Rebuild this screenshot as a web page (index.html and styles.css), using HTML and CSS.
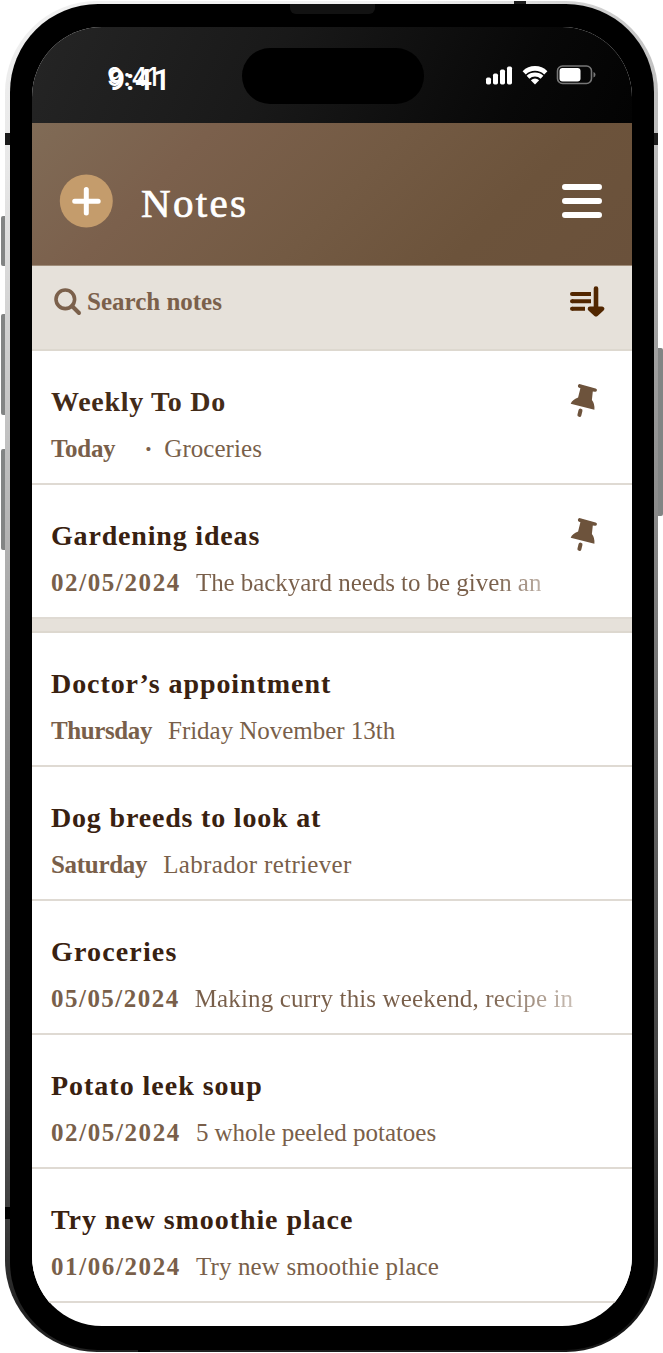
FILE: index.html
```html
<!DOCTYPE html>
<html lang="en">
<head>
<meta charset="utf-8">
<title>Notes</title>
<link rel="stylesheet" href="styles.css">
</head>
<body>
<svg class="defs" aria-hidden="true">
  <symbol id="pin" viewBox="0 0 28 36">
    <path d="M9.400 1 25.600 5.400q1.700.6 1.300 2.200-.5 1.500-2.100 1.200l-2-.4-.9 8.500q3 3.700 2.500 9.800L.700 20.700q1.500-4 7.400-6.200L10.400 5.300 9.100 4.800Q7.600 4.300 7.900 2.600 8.400.900 9.400 1Z" fill="#6d533c"/>
    <path d="m10.500 27.600-1.100 4.300" stroke="#6d533c" stroke-width="4" stroke-linecap="round"/>
  </symbol>
</svg>
<div class="phone">
  <i class="key key-action"></i><i class="key key-up"></i><i class="key key-down"></i><i class="key key-power"></i>
  <i class="band band-top"></i><i class="band band-left"></i><i class="band band-right"></i><i class="band band-left low"></i><i class="band band-bottom"></i>
  <div class="bezel">
    <i class="speaker"></i>
    <main class="screen">
      <div class="status">
        <div class="clock"><span class="time-small">9:41</span><span class="time-large">9:41</span></div>
        <div class="island"></div>
        <svg class="indicators" width="111" height="22" viewBox="0 0 111 22">
          <g fill="#fff"><rect x="1" y="12.500" width="5" height="7" rx="1.700"/><rect x="8" y="8.500" width="5" height="11" rx="1.700"/><rect x="15" y="4.500" width="5" height="15" rx="1.700"/><rect x="22" y="1.500" width="5" height="18" rx="1.700"/></g>
          <g fill="none" stroke="#fff"><path d="M39.200 7.800a15.500 15.500 0 0 1 21.600 0" stroke-width="4.600"/><path d="M43 12.200a10.200 10.200 0 0 1 14 0" stroke-width="4"/></g>
          <path d="M45.800 15.200q4.200-3.200 8.400 0L50 19.600Z" fill="#fff"/>
          <rect x="72.500" y="1" width="34" height="17.500" rx="5" fill="none" stroke="#777" stroke-width="1.600"/>
          <rect x="74.500" y="3" width="21" height="13.500" rx="3" fill="#fff"/><path d="M108.500 7v5.500q2-.7 2-2.700t-2-2.800Z" fill="#777"/>
        </svg>
      </div>
      <header class="header">
        <svg class="add" width="54" height="54" viewBox="0 0 54 54"><circle cx="27.300" cy="27" r="26.500" fill="#c49c6c"/><path d="M27.300 15.500v23.500M15.700 27.200h23.500" stroke="#fff" stroke-width="5" stroke-linecap="round"/></svg>
        <h1>Notes</h1>
        <svg class="menu" width="40" height="34" viewBox="0 0 40 34"><path d="M3 3h34M3 17h34M3 31h34" stroke="#fff" stroke-width="6" stroke-linecap="round"/></svg>
      </header>
      <div class="search">
        <svg width="28" height="28" viewBox="0 0 28 28" fill="none" stroke="#7b604b" stroke-width="3.600"><circle cx="11.300" cy="11.300" r="9.300"/><path d="m18 18 7 7" stroke-linecap="round" stroke-width="4"/></svg>
        <span>Search notes</span>
        <svg class="sort" width="35" height="32" viewBox="0 0 35 32" fill="none" stroke="#512600"><path d="M2 8h19M2 15.300h19M2 22.700h13" stroke-width="4"/><path d="M2 8h.1M2 15.300h.1M2 22.700h.1" stroke-width="4" stroke-linecap="round"/><path d="M26 2.500v25M20 22.700l6 5.500 6-5.500Z" fill="#512600" stroke-width="4.600" stroke-linecap="round" stroke-linejoin="round"/></svg>
      </div>
      <section class="notes pinned">
        <article class="note"><h2 class="t1">Weekly To Do</h2><p><b class="d1">Today</b><i class="dot">·</i><span class="s1">Groceries</span></p><svg class="pin"><use href="#pin"/></svg></article>
        <article class="note"><h2 class="t2">Gardening ideas</h2><p><b class="date">02/05/2024</b><span class="s2">The backyard needs to be given an</span></p><svg class="pin"><use href="#pin"/></svg></article>
      </section>
      <section class="notes">
        <article class="note"><h2 class="t3">Doctor’s appointment</h2><p><b class="d3">Thursday</b><span class="s3">Friday November 13th</span></p></article>
        <article class="note"><h2 class="t4">Dog breeds to look at</h2><p><b class="d4">Saturday</b><span class="s4">Labrador retriever</span></p></article>
        <article class="note"><h2 class="t5">Groceries</h2><p><b class="date d5">05/05/2024</b><span class="s5">Making curry this weekend, recipe in</span></p></article>
        <article class="note"><h2 class="t6">Potato leek soup</h2><p><b class="date">02/05/2024</b><span class="s6">5 whole peeled potatoes</span></p></article>
        <article class="note"><h2 class="t7">Try new smoothie place</h2><p><b class="date">01/06/2024</b><span class="s7">Try new smoothie place</span></p></article>
      </section>
    </main>
  </div>
</div>
</body>
</html>
```

FILE: styles.css
```css
* { box-sizing: border-box; }
body { margin: 0; width: 663px; height: 1353px; overflow: hidden; background: #fff; font-family: "Liberation Serif", serif; }
.defs { position: absolute; width: 0; height: 0; }
.phone { position: relative; width: 653px; height: 1351px; margin: 1px 0 0 5px; padding: 3px 4px 2px 5px; border-radius: 92px; background: linear-gradient(100deg, transparent 45%, rgba(0,0,0,.35)), linear-gradient(#f1f1f1, #e8e8e8 12%, #a8a8a8 45%, #606060 80%, #222 97%); }
.bezel { position: relative; height: 1346px; padding: 23px 22px 25px; border-radius: 88px; background: #000; }
.screen { height: 1299px; border-radius: 70px; overflow: hidden; background: #fff; }
.speaker { position: absolute; left: 280px; top: 0; width: 85px; height: 10px; border-radius: 0 0 6px 6px; background: #121212; }
.key { position: absolute; width: 5px; background: #828484; border-radius: 2px 0 0 2px; z-index: -1; }
.key-action { left: -4px; top: 215px; height: 50px; }
.key-up { left: -4px; top: 313px; height: 101px; }
.key-down { left: -4px; top: 448px; height: 101px; }
.key-power { left: 652px; top: 347px; height: 168px; width: 6px; border-radius: 0 2px 2px 0; }
.band { position: absolute; background: #1c1c1c; }
.band-top { left: 509px; top: 0; width: 12px; height: 4px; }
.band-left { left: 0; top: 132px; width: 5px; height: 12px; }
.band-right { right: 0; top: 132px; width: 5px; height: 12px; }
.low { top: 1206px; background: #000; }
.band-bottom { left: 133px; bottom: 0; width: 12px; height: 3px; background: #000; }
.status { height: 96px; display: grid; grid-template-columns: 210px 182px 1fr; background: linear-gradient(115deg, #252525, #191919 40%, #080808 80%, #030303); }
.clock { display: grid; justify-items: start; align-items: start; padding: 38px 0 0 75px; color: #fff; }
.clock span { grid-area: 1 / 1; }
.time-small { font: 500 25px/24px Inter, sans-serif; letter-spacing: .5px; }
.time-large { margin: 3px 0 0 1px; font: 600 30px/24px Roboto, sans-serif; letter-spacing: .9px; }
.island { height: 56px; margin-top: 21px; border-radius: 28px; background: #000; }
.indicators { margin: 38px 0 0 61px; }
.header { height: 143px; display: flex; align-items: center; padding: 14px 30px 0 27px; background: linear-gradient(135deg, #806b56, #7b604c 25%, #735a43 52%, #6c533b 75%, #6a513b); border-bottom: 1px solid #a08d7a; }
h1 { margin: 3px 0 0 28px; font-size: 41px; font-weight: 400; letter-spacing: 2.3px; color: #fff; -webkit-text-stroke: .7px #fff; }
.menu { margin-left: auto; }
.search { height: 85px; display: flex; align-items: center; padding: 0 27px 12px 22px; background: #e6e1da; border-bottom: 2px solid #ddd8cf; color: #7b604b; font-size: 25px; font-weight: 700; }
.search span { margin-left: 5px; }
.sort { margin: 1px 0 0 auto; }
.note { position: relative; height: 134px; padding: 34px 19px 0; background: #fff; border-bottom: 2px solid #dfdad3; }
h2 { margin: 0; font-size: 28px; line-height: 34px; font-weight: 700; letter-spacing: .82px; color: #392110; white-space: nowrap; }
.note p { margin: 16px 0 0; display: flex; font-size: 25px; line-height: 28px; color: #795f4a; white-space: nowrap; }
.note p span { margin-left: 16px; }
.note p .dot { width: 20px; margin-left: 29px; font-style: normal; font-weight: 700; }
.note p .s1 { margin-left: 0; letter-spacing: .05px; }
.pinned { padding-bottom: 12px; background: #e6e1da; border-bottom: 2px solid #ddd8cf; }
.pin { position: absolute; left: 538px; top: 32px; width: 28px; height: 36px; }
.t1 { color: #432b18; letter-spacing: .7px; }
.t3, .t7 { letter-spacing: .93px; }
.t5 { letter-spacing: 1.15px; }
.t6 { letter-spacing: .98px; }
.d1, .d4 { letter-spacing: -.3px; }
.d3 { letter-spacing: -.4px; }
.date { letter-spacing: 1.6px; margin-right: -1px; }
.note .d5 { letter-spacing: 1.48px; }
.s2 { letter-spacing: -.05px; }
.s3, .s6 { letter-spacing: -.03px; }
.s4 { letter-spacing: .33px; }
.s5, .s7 { letter-spacing: .14px; }
.s2, .s5 { background: linear-gradient(90deg, #795f4a 86%, #bdb0a6); background-clip: text; color: transparent; }
.s5 { background-image: linear-gradient(90deg, #795f4a 76%, #c9beb5); }
```
